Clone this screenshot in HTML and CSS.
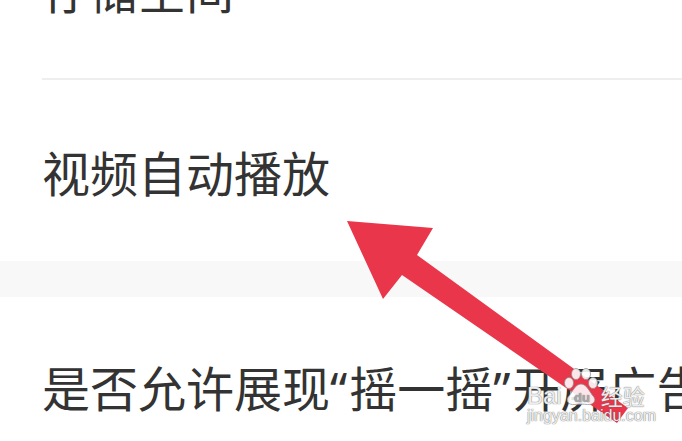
FILE: index.html
```html
<!DOCTYPE html>
<html lang="zh-CN">
<head>
<meta charset="utf-8">
<title>设置</title>
<link rel="stylesheet" href="styles.css">
</head>
<body>
<div class="page">
  <div class="group group-top">
    <div class="row row-divided"><span class="label">存储空间</span></div>
    <div class="row"><span class="label">视频自动播放</span></div>
  </div>
  <div class="band"></div>
  <div class="group">
    <div class="row"><span class="label">是否允许展现<span class="quote">“</span>摇一摇<span class="quote">”</span>开屏广告</span></div>
  </div>

  <svg class="arrow" width="682" height="441" viewBox="0 0 682 441">
    <polygon points="347,221 433,228 417,255 628,408 617,423 402,275 383,299" fill="#e9364a"/>
  </svg>

  <div class="watermark">
    <div class="wm-top">
      <span class="wm-bai">Bai</span>
      <svg class="paw" width="36" height="38" viewBox="0 0 36 38">
        <g fill="rgba(255,255,255,0.88)" stroke="rgba(140,140,140,0.75)" stroke-width="1">
          <ellipse cx="6" cy="15" rx="4.5" ry="5.5"/>
          <ellipse cx="13" cy="6" rx="4.5" ry="5.5"/>
          <ellipse cx="23" cy="6" rx="4.5" ry="5.5"/>
          <ellipse cx="30" cy="15" rx="4.5" ry="5.5"/>
          <path d="M18 16 C12 16 9 25 5.5 28.5 C2 32.5 6 37.5 11.5 36.5 C15 36 21 36 24.5 36.5 C30 37.5 34 32.5 30.5 28.5 C27 25 24 16 18 16 Z"/>
        </g>
        <text x="19" y="34" text-anchor="middle" class="paw-du">du</text>
      </svg>
      <span class="wm-jy">经验</span>
    </div>
    <div class="wm-url">jingyan.baidu.com</div>
  </div>
</div>
</body>
</html>
```
FILE: styles.css
```css
html, body {
  margin: 0;
  padding: 0;
  background: #ffffff;
  overflow: hidden;
}

.page {
  position: relative;
  width: 682px;
  height: 441px;
  overflow: hidden;
  font-family: "Noto Sans CJK SC", "Noto Sans", sans-serif;
  color: #333333;
}

.group-top {
  margin-top: -103px;
}

.row {
  margin-left: 42px;
  height: 181px;
  display: flex;
  align-items: center;
  white-space: nowrap;
}

.row-divided {
  border-bottom: 2px solid #eeeeee;
}

.label {
  font-size: 48px;
  line-height: 1;
}

.quote {
  font-family: "Noto Sans", sans-serif;
  margin-right: 2px;
}

.band {
  height: 36px;
  background: #f8f8f8;
}

.arrow {
  position: absolute;
  left: 0;
  top: 0;
}

.watermark {
  position: absolute;
  left: 527px;
  top: 368px;
  display: flex;
  flex-direction: column;
  align-items: flex-start;
  font-family: "Liberation Sans", Arial, sans-serif;
  color: rgba(255, 255, 255, 0.9);
  text-shadow: 0 0 1px rgba(100, 100, 100, 0.8), 0 0 1px rgba(100, 100, 100, 0.8);
}

.wm-top {
  display: flex;
  align-items: flex-end;
}

.wm-bai {
  font-size: 24px;
  line-height: 1;
  margin-bottom: -2px;
}

.paw {
  margin-left: 1px;
}

.paw-du {
  font-family: "Liberation Sans", Arial, sans-serif;
  font-size: 13px;
  font-weight: bold;
  fill: rgba(180, 180, 180, 0.8);
}

.wm-jy {
  font-family: "Noto Sans CJK SC", sans-serif;
  font-size: 22px;
  line-height: 1;
  margin-left: 2px;
  margin-bottom: 0;
}

.wm-url {
  font-size: 16px;
  line-height: 1;
  margin-top: 2px;
}
```
